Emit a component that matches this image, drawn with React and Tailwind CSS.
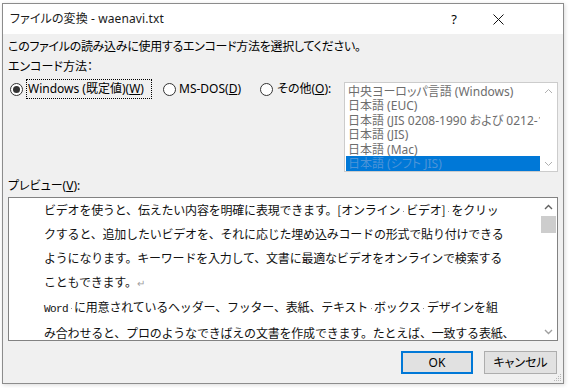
import React from "react";

const ui = "font-['Noto_Sans','Noto_Sans_CJK_JP',sans-serif] [font-feature-settings:'palt']";

function Radio({ checked }) {
  return (
    <span className="flex h-[13px] w-[13px] shrink-0 items-center justify-center rounded-full border border-[#333333] bg-white">
      {checked && <span className="h-[7px] w-[7px] rounded-full bg-[#333333]" />}
    </span>
  );
}

function Chevron({ up, color = "#b0b0b0", w = 1 }) {
  return (
    <svg width="9" height="6" viewBox="0 0 9 6">
      <polyline
        points={up ? "1,5 4.5,1.5 8,5" : "1,1 4.5,4.5 8,1"}
        fill="none"
        stroke={color}
        strokeWidth={w}
      />
    </svg>
  );
}

const Dot = () => (
  <span className="inline-flex w-[6px] items-center justify-center align-middle">
    <span className="h-[1px] w-[1px] bg-[#909090]" />
  </span>
);

export default function App() {
  const items = [
    "中央ヨーロッパ言語 (Windows)",
    "日本語 (EUC)",
    "日本語 (JIS 0208-1990 および 0212-1990)",
    "日本語 (JIS)",
    "日本語 (Mac)",
  ];
  return (
    <div className={`h-[388px] w-[569px] overflow-hidden bg-white pl-[2px] pt-[3px] text-[12px] text-black ${ui}`}>
      <div className="relative flex h-[381px] w-[562px] flex-col border border-[#8c8c8c] bg-[#f0f0f0] shadow-[1px_1px_4px_rgba(0,0,0,0.15)]">
        {/* Title bar */}
        <div className="flex h-[30px] items-center bg-white pl-[7px]">
          <span className="leading-[16px] tracking-[0.1px] text-[#1a1a1a]">ファイルの変換 - waenavi.txt</span>
          <span className="ml-auto mr-[36px] text-[13px] leading-[16px]">?</span>
          <span className="mr-[59px] flex items-center">
            <svg width="11" height="11" viewBox="0 0 11 11">
              <line x1="0.5" y1="0.5" x2="10.5" y2="10.5" stroke="#111" strokeWidth="1" />
              <line x1="10.5" y1="0.5" x2="0.5" y2="10.5" stroke="#111" strokeWidth="1" />
            </svg>
          </span>
        </div>

        {/* Body */}
        <div className="flex flex-1 flex-col pl-[5px] pr-[5px] pt-[3px]">
          <div className="leading-[20px] tracking-[-0.3px]">このファイルの読み込みに使用するエンコード方法を選択してください。</div>
          <div className="leading-[20px]">エンコード方法：</div>

          <div className="mt-[2px] flex items-start">
            <div className="flex h-[20px] items-center">
              <span className="ml-[2px]"><Radio checked /></span>
              <span className="ml-[3px] flex h-[20px] w-[126px] items-center border border-dotted border-black pl-[1px] leading-[16px]">
                Windows (既定値)(<u>W</u>)
              </span>
              <span className="ml-[11px]"><Radio /></span>
              <span className="ml-[3px] w-[72px] leading-[16px]">MS-DOS(<u>D</u>)</span>
              <span className="ml-[9px]"><Radio /></span>
              <span className="ml-[4px] leading-[16px]">その他(<u>O</u>):</span>
            </div>

            <div className="ml-auto mt-[3px] flex h-[90px] w-[214px] border border-[#cccccc] bg-white">
              <div className="flex min-w-0 flex-1 flex-col pl-[1px] pt-[1px] text-[#6d6d6d]">
                {items.map((t) => (
                  <div key={t} className="h-[14.6px] overflow-hidden whitespace-nowrap pl-[2px] leading-[15px]">
                    {t}
                  </div>
                ))}
                <div className="h-[15px] overflow-hidden whitespace-nowrap bg-[#0078d7] pl-[2px] leading-[15px] text-[#4d94d8]">
                  日本語 (シフト JIS)
                </div>
              </div>
              <div className="flex w-[17px] shrink-0 flex-col items-center justify-between pb-[4px] pt-[5px]">
                <Chevron up />
                <Chevron />
              </div>
            </div>
          </div>

          <div className="mt-[4px] leading-[20px]">プレビュー(<u>V</u>):</div>

          <div className="mt-[1px] flex h-[144px] border border-[#828282] bg-white">
            <div className="min-w-0 flex-1 overflow-hidden pl-[35px] font-['Noto_Sans_CJK_JP',sans-serif] text-[12px] leading-[24px] tracking-[-0.2px] text-[#111] [font-feature-settings:normal]">
              <div className="whitespace-nowrap">ビデオを使うと、伝えたい内容を明確に表現できます。[オンライン<Dot />ビデオ]<Dot />をクリッ</div>
              <div className="whitespace-nowrap">クすると、追加したいビデオを、それに応じた埋め込みコードの形式で貼り付けできる</div>
              <div className="whitespace-nowrap">ようになります。キーワードを入力して、文書に最適なビデオをオンラインで検索する</div>
              <div className="whitespace-nowrap">こともできます。<span className="text-[10px] text-[#a0a0a0]">↵</span></div>
              <div className="whitespace-nowrap">
                <span className="font-['Liberation_Mono',monospace] text-[11px] tracking-[-0.6px]">Word</span><Dot />に用意されているヘッダー、フッター、表紙、テキスト<Dot />ボックス<Dot />デザインを組
              </div>
              <div className="whitespace-nowrap">み合わせると、プロのようなできばえの文書を作成できます。たとえば、一致する表紙、</div>
            </div>
            <div className="flex w-[17px] shrink-0 flex-col">
              <div className="flex h-[18px] items-center justify-center">
                <Chevron up color="#606060" w={1.4} />
              </div>
              <div className="mx-[1px] h-[17px] bg-[#cdcdcd]" />
              <div className="flex-1" />
              <div className="flex h-[17px] items-center justify-center">
                <Chevron color="#a0a0a0" w={1.4} />
              </div>
            </div>
          </div>

          <div className="mt-[10px] flex justify-end gap-[11px] pr-[1px]">
            <button className="flex h-[23px] w-[72px] items-center justify-center border-2 border-[#0078d7] bg-[#e1e1e1] leading-[16px]">
              OK
            </button>
            <button className="flex h-[23px] w-[73px] items-center justify-center border border-[#adadad] bg-[#e1e1e1] leading-[16px]">
              キャンセル
            </button>
          </div>
        </div>

        {/* size grip */}
        <svg className="absolute bottom-[1px] right-[1px]" width="10" height="10" viewBox="0 0 10 10">
          <rect x="8" y="2" width="1" height="1" fill="#b8b8b8" />
          <rect x="6" y="4" width="1" height="1" fill="#b8b8b8" />
          <rect x="8" y="4" width="1" height="1" fill="#b8b8b8" />
          <rect x="4" y="6" width="1" height="1" fill="#b8b8b8" />
          <rect x="6" y="6" width="1" height="1" fill="#b8b8b8" />
          <rect x="8" y="6" width="1" height="1" fill="#b8b8b8" />
          <rect x="2" y="8" width="1" height="1" fill="#b8b8b8" />
          <rect x="4" y="8" width="1" height="1" fill="#b8b8b8" />
          <rect x="6" y="8" width="1" height="1" fill="#b8b8b8" />
          <rect x="8" y="8" width="1" height="1" fill="#b8b8b8" />
        </svg>
      </div>
    </div>
  );
}
